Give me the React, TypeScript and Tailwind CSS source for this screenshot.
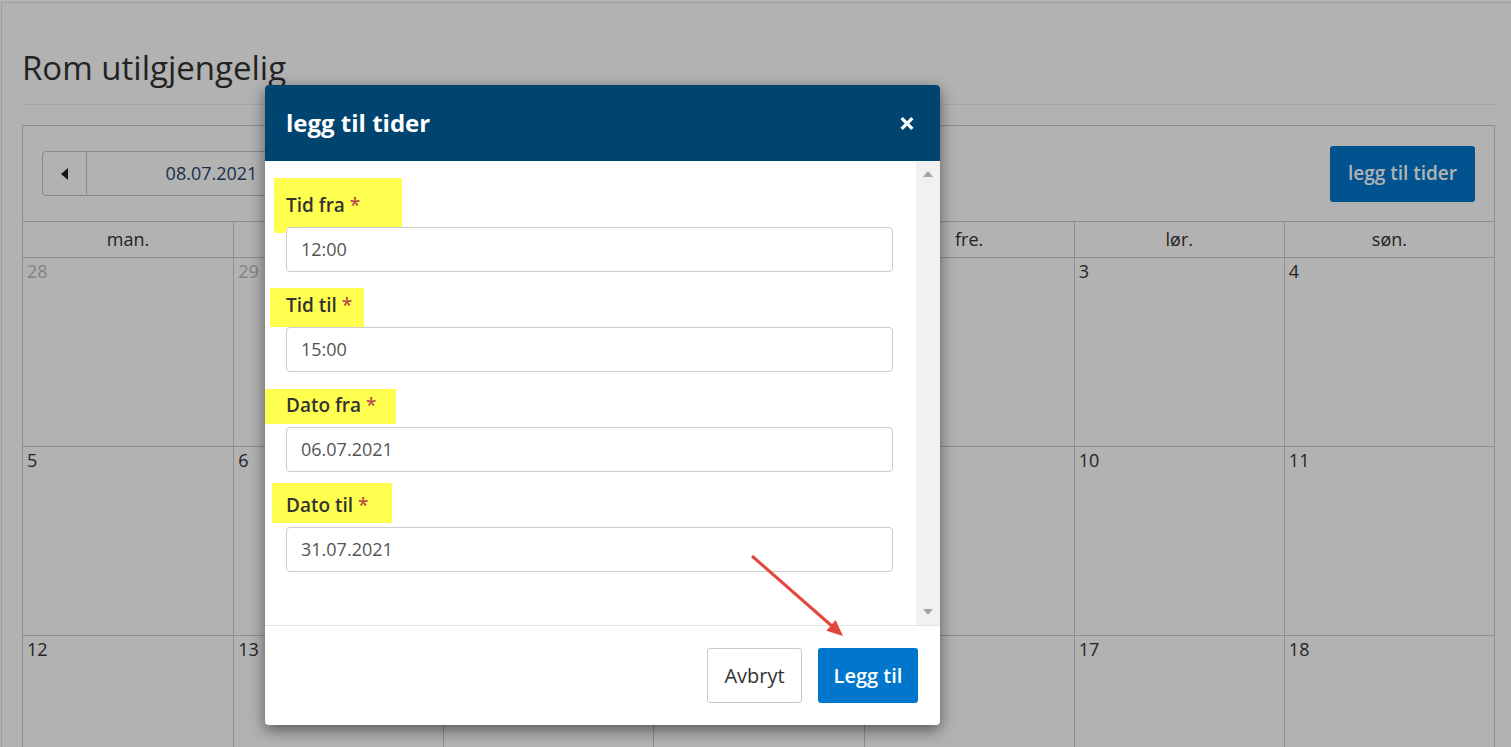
import React from "react";

const weekdays = ["man.", "tir.", "ons.", "tor.", "fre.", "lør.", "søn."];

const weeks: { n: number; muted?: boolean }[][] = [
  [
    { n: 28, muted: true },
    { n: 29, muted: true },
    { n: 30, muted: true },
    { n: 1 },
    { n: 2 },
    { n: 3 },
    { n: 4 },
  ],
  [5, 6, 7, 8, 9, 10, 11].map((n) => ({ n })),
  [12, 13, 14, 15, 16, 17, 18].map((n) => ({ n })),
];

type Field = {
  label: string;
  value: string;
  // annotation highlight box, relative to the label's top-left
  hl: string;
};

const fields: Field[] = [
  { label: "Tid fra", value: "12:00", hl: "left-[-12px] top-[-14px] w-[128px] h-[55px]" },
  { label: "Tid til", value: "15:00", hl: "left-[-16px] top-[-4px] w-[94px] h-[39px]" },
  { label: "Dato fra", value: "06.07.2021", hl: "left-[-22px] top-[-3px] w-[132px] h-[35px]" },
  { label: "Dato til", value: "31.07.2021", hl: "left-[-14px] top-[-9px] w-[120px] h-[40px]" },
];

function Calendar() {
  return (
    <div className="mt-[20px] w-[1473px] border border-[#ccc]">
      {/* verktøylinje */}
      <div className="flex h-[95px] items-center justify-between px-[19px]">
        <div className="flex h-[45px]">
          <button className="flex w-[45px] items-center justify-center rounded-l-[4px] border border-[#c5c5c5] bg-white">
            <svg width="7" height="12" viewBox="0 0 7 12">
              <polygon points="7,0 7,12 0,6" fill="#222" />
            </svg>
          </button>
          <div className="flex w-[250px] items-center justify-center border-y border-r border-[#c5c5c5] text-[18px] text-[#2a466b]">
            08.07.2021
          </div>
          <button className="flex w-[45px] items-center justify-center rounded-r-[4px] border-y border-r border-[#c5c5c5] bg-white">
            <svg width="7" height="12" viewBox="0 0 7 12">
              <polygon points="0,0 0,12 7,6" fill="#222" />
            </svg>
          </button>
        </div>
        <button className="h-[56px] rounded-[3px] bg-[#0077cc] px-[18px] text-[19px] font-semibold text-white">
          legg til tider
        </button>
      </div>

      {/* ukedager */}
      <div className="grid grid-cols-7 border-t border-[#ccc]">
        {weekdays.map((d, i) => (
          <div
            key={d}
            className={`flex h-[36px] items-center justify-center border-b border-[#ccc] text-[18px] leading-[27px] ${
              i > 0 ? "border-l" : ""
            }`}
          >
            {d}
          </div>
        ))}
        {weeks.flat().map((c, i) => (
          <div
            key={i}
            className={`h-[189px] border-b border-[#ccc] pl-[4px] text-[18px] leading-[27px] ${
              i % 7 > 0 ? "border-l" : ""
            } ${c.muted ? "text-[#bbb]" : "text-[#333]"}`}
          >
            {c.n}
          </div>
        ))}
      </div>
    </div>
  );
}

function Modal() {
  return (
    <div className="absolute left-[265px] top-[85px] flex h-[640px] w-[675px] flex-col overflow-hidden rounded-[4px] bg-white shadow-[0_5px_15px_rgba(0,0,0,0.5)]">
      <div className="flex h-[76px] shrink-0 items-center justify-between bg-[#004470] pl-[21px] pr-[26px]">
        <h2 className="text-[24px] font-bold leading-[36px] text-white">legg til tider</h2>
        <svg width="14" height="13" viewBox="0 0 14 13">
          <path d="M1.6 1.2 L12.4 11.8 M12.4 1.2 L1.6 11.8" stroke="#fff" strokeWidth="3.2" />
        </svg>
      </div>

      <div className="flex min-h-0 flex-1">
        <div className="flex-1 pl-[21px] pr-[23px] pt-[31px]">
          {fields.map((f, i) => (
            <div key={f.label} className={i > 0 ? "mt-[20px]" : ""}>
              <label className="relative block text-[19px] font-semibold leading-[27px] text-[#333]">
                <span className={`absolute bg-[#ffff50] ${f.hl}`} />
                <span className="relative">
                  {f.label} <span className="text-[#b94a48]">*</span>
                </span>
              </label>
              <div className="relative mt-[8px] flex h-[45px] items-center rounded-[4px] border border-[#ccc] bg-white px-[14px] text-[18px] text-[#555]">
                {f.value}
              </div>
            </div>
          ))}
        </div>
        {/* rullefelt */}
        <div className="flex w-[24px] flex-col items-center justify-between bg-[#f1f1f1] py-[10px]">
          <svg width="10" height="6" viewBox="0 0 10 6">
            <polygon points="0,6 10,6 5,0" fill="#a3a3a3" />
          </svg>
          <svg width="10" height="6" viewBox="0 0 10 6">
            <polygon points="0,0 10,0 5,6" fill="#a3a3a3" />
          </svg>
        </div>
      </div>

      <div className="flex h-[100px] shrink-0 items-center justify-end gap-[16px] border-t border-[#e5e5e5] pr-[22px]">
        <button className="h-[55px] w-[95px] rounded-[3px] border border-[#c4c9cf] bg-white text-[20px] text-[#333]">
          Avbryt
        </button>
        <button className="h-[55px] w-[100px] rounded-[3px] bg-[#0077cc] text-[20px] font-semibold text-white">
          Legg til
        </button>
      </div>
    </div>
  );
}

export default function App() {
  return (
    <div className="relative h-[747px] w-[1511px] overflow-hidden bg-white font-['Open_Sans',sans-serif] text-[#333]">
      <div className="ml-[1px] mt-[2px] h-[760px] border-l border-t border-[#e3e3e3] pl-[20px] pt-[45px]">
        <h1 className="w-[1474px] border-b border-[#eee] pb-[16px] text-[33px] font-normal leading-[40px]">
          Rom utilgjengelig
        </h1>
        <Calendar />
      </div>

      {/* mørk bakgrunn bak dialogen */}
      <div className="absolute inset-0 bg-black/30" />

      <Modal />

      {/* rød pil (markering) */}
      <svg className="pointer-events-none absolute left-0 top-0" width="1511" height="747">
        <line x1="752" y1="556" x2="833" y2="627" stroke="#e2463d" strokeWidth="3" />
        <polygon points="843,636 826.4,630.7 835.6,620.1" fill="#e2463d" />
      </svg>
    </div>
  );
}
